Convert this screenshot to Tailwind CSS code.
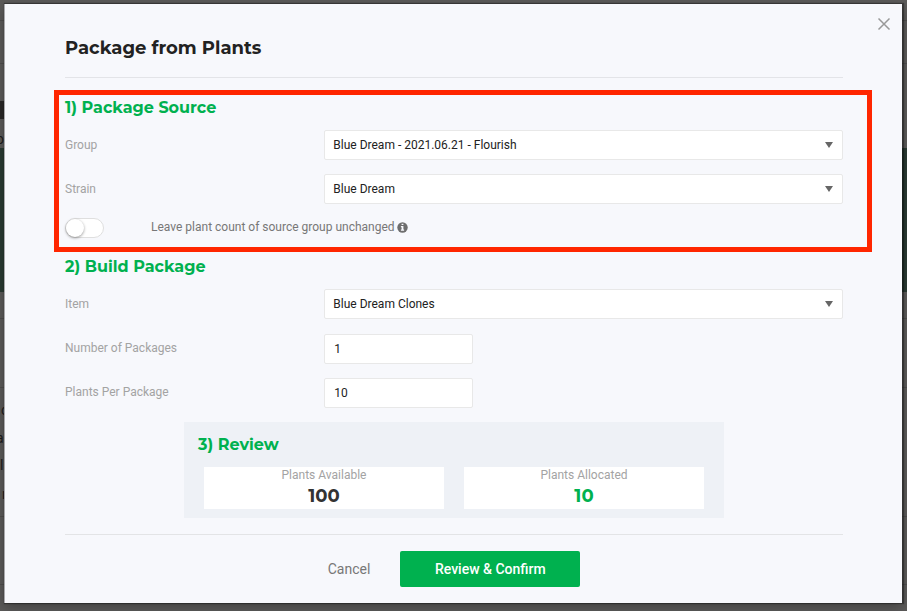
<!DOCTYPE html>
<html lang="en">
<head>
<meta charset="utf-8">
<meta name="viewport" content="width=device-width, initial-scale=1">
<title>Package from Plants</title>
<script src="https://cdn.jsdelivr.net/npm/@tailwindcss/browser@4"></script>
</head>
<body class="relative min-h-screen overflow-x-hidden bg-[#5c5b5a] font-[Roboto,sans-serif] text-[12px] leading-4 text-[#a3a3a3]">
  <!-- Dimmed page behind the dialog -->
  <div class="absolute inset-0 overflow-hidden text-[#1c1c1c]" aria-hidden="true">
    <div class="absolute inset-x-0 top-5 h-px bg-[#4f4e4d]"></div>
    <div class="absolute inset-x-0 top-[63px] h-px bg-[#4f4e4d]"></div>
    <div class="absolute left-0 top-[101px] h-[18px] w-[60px] bg-[#292827]"></div>
    <div class="absolute inset-x-0 top-[148px] h-[144px] bg-[#2a3b33]"></div>
    <div class="absolute inset-x-0 top-[318px] h-px bg-[#4f4e4d]"></div>
    <div class="absolute inset-x-0 top-[387px] h-px bg-[#4f4e4d]"></div>
    <div class="absolute inset-x-0 top-[516px] h-px bg-[#4f4e4d]"></div>
    <div class="absolute inset-x-0 top-[584px] h-px bg-[#4f4e4d]"></div>
    <span class="absolute -left-1 top-[131px] text-[14px]">o</span>
    <span class="absolute left-px top-[402px] text-[14px]">c</span>
    <span class="absolute -left-1 top-[430px] text-[14px]">a</span>
    <span class="absolute left-0 top-[457px] text-[14px]">l</span>
    <span class="absolute left-[2px] top-[486px] text-[14px]">r</span>
  </div>

  <main role="dialog" aria-labelledby="title" class="relative mt-1 mr-[5px] mb-2 ml-1 inline-block w-[calc(100%-9px)] border-l border-[#a9a9ac] bg-[#f7f8fc] pr-[59px] pb-4 pl-[60px] align-top shadow-[1px_0_1px_1px_rgba(0,0,0,0.35),0_4px_12px_rgba(0,0,0,0.3)]">
    <button type="button" aria-label="Close" class="absolute top-[13px] right-[11px] flex size-[14px] items-center justify-center text-[#999]">
      <svg viewBox="0 0 14 14" class="size-[14px]" fill="none" stroke="currentColor" stroke-width="1.5"><path d="M1.5 1.5 12.5 12.5M12.5 1.5 1.5 12.5"/></svg>
    </button>

    <header class="border-b border-[#e3e4e8] pt-8 pb-[17px]">
      <h1 id="title" class="font-[Montserrat,Inter,sans-serif] text-[18px] leading-6 font-bold text-[#222]">Package from Plants</h1>
    </header>

    <section class="mt-3 -mr-[29px] -ml-[11px] border-5 border-[#ff2600] pr-6 pb-[9px] pl-[6px]">
      <h2 class="mb-[9px] font-[Montserrat,Inter,sans-serif] text-[16px] leading-[26px] font-bold text-[#00b14f]">1) Package Source</h2>
      <div class="flex flex-col gap-[14px]">
        <div class="grid grid-cols-[1fr_2fr] items-center">
          <label for="group">Group</label>
          <div class="relative">
            <select id="group" class="block h-[30px] w-full appearance-none rounded-[2px] border border-[#e8e8e8] bg-white px-2 text-[#222]"><option>Blue Dream - 2021.06.21 - Flourish</option></select>
            <svg viewBox="0 0 8 6" class="pointer-events-none absolute top-[12px] right-[10px] h-[6px] w-[8px]" fill="#666"><path d="M0 0H8L4 6Z"/></svg>
          </div>
        </div>
        <div class="grid grid-cols-[1fr_2fr] items-center">
          <label for="strain">Strain</label>
          <div class="relative">
            <select id="strain" class="block h-[30px] w-full appearance-none rounded-[2px] border border-[#e8e8e8] bg-white px-2 text-[#222]"><option>Blue Dream</option></select>
            <svg viewBox="0 0 8 6" class="pointer-events-none absolute top-[12px] right-[10px] h-[6px] w-[8px]" fill="#666"><path d="M0 0H8L4 6Z"/></svg>
          </div>
        </div>
        <div class="flex">
          <input id="keep" type="checkbox" role="switch" class="h-5 w-[39px] appearance-none rounded-full border border-[#dfdfdf] bg-white before:block before:size-[18px] before:rounded-full before:bg-white before:shadow-[0_1px_3px_rgba(0,0,0,0.4)] checked:bg-[#00b14f] checked:before:ml-[19px]">
          <label for="keep" class="ml-[47px] flex h-[18px] items-center gap-[2px] text-[#777]">Leave plant count of source group unchanged
            <svg viewBox="0 0 11 11" class="size-[11px]"><circle cx="5.5" cy="5.5" r="5.2" fill="#6e6e6e"/><path d="M4.6 1.7H6.4V3.1H4.6ZM3.9 4.1H6.4V7.6H7.1V8.8H3.9V7.6H4.6V5.2H3.9Z" fill="#f7f8fc"/></svg>
          </label>
        </div>
      </div>
    </section>

    <section class="pt-[2px]">
      <h2 class="mb-[9px] font-[Montserrat,Inter,sans-serif] text-[16px] leading-[26px] font-bold text-[#00b14f]">2) Build Package</h2>
      <div class="grid grid-cols-[1fr_2fr] items-center">
        <label for="item">Item</label>
        <div class="relative">
          <select id="item" class="block h-[30px] w-full appearance-none rounded-[2px] border border-[#e8e8e8] bg-white px-2 text-[#222]"><option>Blue Dream Clones</option></select>
          <svg viewBox="0 0 8 6" class="pointer-events-none absolute top-[12px] right-[10px] h-[6px] w-[8px]" fill="#666"><path d="M0 0H8L4 6Z"/></svg>
        </div>
      </div>
      <div class="mt-[15px] flex flex-col gap-[14px]">
        <div class="grid grid-cols-[1fr_2fr] items-center">
          <label for="count" class="pb-[2px]">Number of Packages</label>
          <input id="count" type="text" inputmode="numeric" value="1" class="h-[30px] w-[149px] rounded-[2px] border border-[#e8e8e8] bg-white px-[9px] text-[#222]">
        </div>
        <div class="grid grid-cols-[1fr_2fr] items-center">
          <label for="per" class="pb-[2px]">Plants Per Package</label>
          <input id="per" type="text" inputmode="numeric" value="10" class="h-[30px] w-[149px] rounded-[2px] border border-[#e8e8e8] bg-white px-[9px] text-[#222]">
        </div>
      </div>
    </section>

    <section class="mx-auto mt-[14px] max-w-[540px] bg-[#eef1f6] px-5 pt-[10px] pb-[9px]">
      <h2 class="-ml-[6px] mb-[9px] font-[Montserrat,Inter,sans-serif] text-[16px] leading-[26px] font-bold text-[#00b14f]">3) Review</h2>
      <div class="grid grid-cols-2 gap-5 text-center">
        <div class="bg-white">
          <p>Plants Available</p>
          <p class="font-[Montserrat,Inter,sans-serif] text-[18px] leading-[26px] font-bold text-[#333]">100</p>
        </div>
        <div class="bg-white">
          <p>Plants Allocated</p>
          <p class="font-[Montserrat,Inter,sans-serif] text-[18px] leading-[26px] font-bold text-[#00b14f]">10</p>
        </div>
      </div>
    </section>

    <footer class="mt-4 flex items-center justify-center gap-[30px] border-t border-[#e3e4e6] pt-4 text-[14px]">
      <button type="button" class="text-[#777]">Cancel</button>
      <button type="button" class="h-9 w-[180px] rounded-[2px] bg-[#00b14f] font-medium text-white">Review &amp; Confirm</button>
    </footer>
  </main>
</body>
</html>
